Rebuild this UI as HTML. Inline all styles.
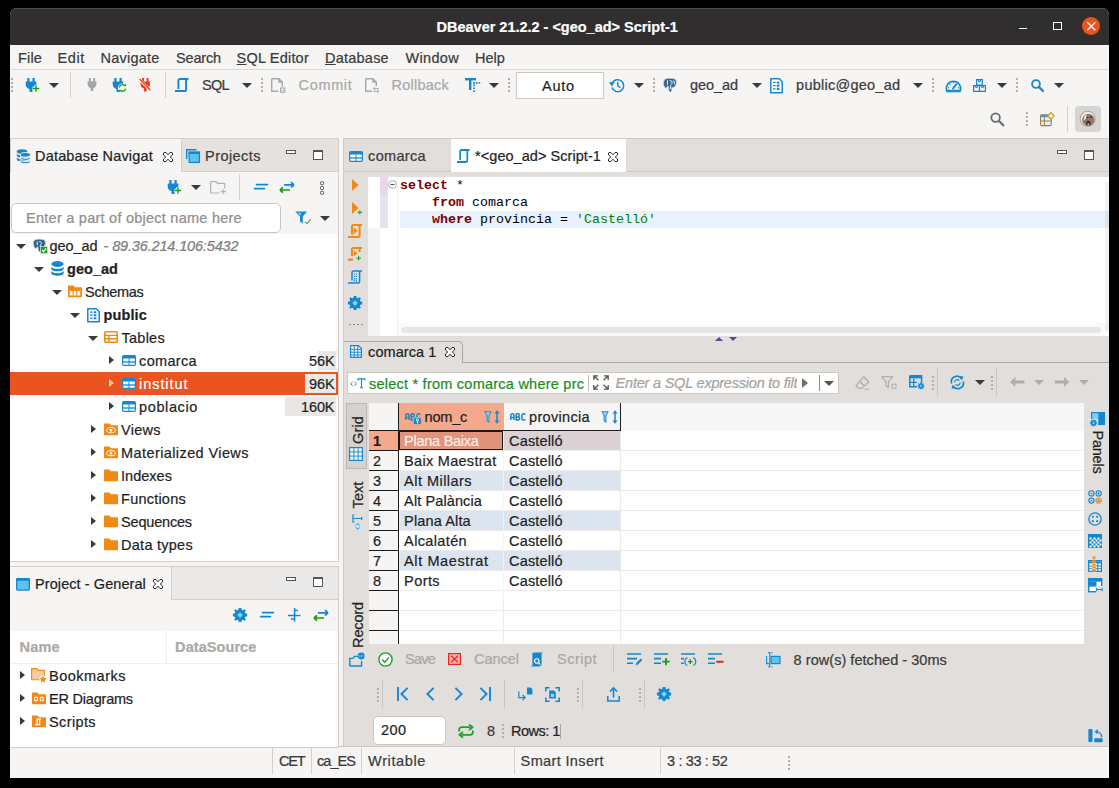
<!DOCTYPE html>
<html>
<head>
<meta charset="utf-8">
<title>DBeaver</title>
<style>
html,body{margin:0;padding:0;background:#000;}
body{width:1119px;height:788px;position:relative;overflow:hidden;font-family:"Liberation Sans",sans-serif;font-size:14.5px;color:#3a3a3a;}
.a{position:absolute;}
.t{position:absolute;white-space:nowrap;line-height:20px;height:20px;font-size:14.5px;-webkit-text-stroke:0.22px currentColor;margin-left:0.6px;}
.b{font-weight:bold;}
.i{font-style:italic;}
.dis{color:#a9a8a6;}
.dk{color:#1f1f1f;}
svg{position:absolute;overflow:visible;}
#win{position:absolute;left:10px;top:8px;width:1099px;height:770px;background:#f6f5f4;border-radius:7px 7px 0 0;overflow:hidden;}
#title{position:absolute;left:0;top:0;width:1099px;height:37px;background:#302e2f;border-top:1px solid #514f50;box-sizing:border-box;}
.hd{position:absolute;width:2px;height:14px;background:repeating-linear-gradient(to bottom,#b9ad9e 0,#b9ad9e 2px,transparent 2px,transparent 4px);}
.sep{position:absolute;width:1px;background:#d3cfcb;}
.arr{position:absolute;width:0;height:0;border-left:5px solid transparent;border-right:5px solid transparent;border-top:5.5px solid #3a3a3a;}
.tr{position:absolute;width:0;height:0;border-top:4.5px solid transparent;border-bottom:4.5px solid transparent;border-left:5px solid #3a3a3a;}
.td{position:absolute;width:0;height:0;border-left:5px solid transparent;border-right:5px solid transparent;border-top:5px solid #3a3a3a;}
.mono{font-family:"Liberation Mono",monospace;font-size:13.33px;line-height:17px;white-space:pre;position:absolute;color:#000;}
.kw{color:#7f0000;font-weight:bold;}
.str{color:#008000;}
</style>
</head>
<body>
<svg width="0" height="0" style="left:-10px;top:-10px">
<defs>
<!-- plug 12x14 -->
<path id="plug" d="M2.3 0 h2.2 v3.6 h3 v-3.6 h2.2 v3.6 h1.6 v2.8 c0 2.6 -2 4 -3.8 4.5 v3.1 h-3 v-3.1 c-1.8 -0.5 -3.8 -1.9 -3.8 -4.5 v-2.8 h1.6 z"/>
<!-- tab close X 10x10 -->
<path id="tabx" d="M1 0.5 L3 0.5 L5 2.8 L7 0.5 L9 0.5 L9.5 1 L9.5 3 L7.2 5 L9.5 7 L9.5 9 L9 9.5 L7 9.5 L5 7.2 L3 9.5 L1 9.5 L0.5 9 L0.5 7 L2.8 5 L0.5 3 L0.5 1 Z" fill="#fff" stroke="#2b2b2b" stroke-width="1"/>
<!-- folder 14x12 -->
<path id="folder" d="M0.5 0.5 h5 l1.5 1.8 h6.5 a0.5 0.5 0 0 1 0.5 0.5 v9 a0.5 0.5 0 0 1 -0.5 0.5 h-13 a0.5 0.5 0 0 1 -0.5 -0.5 v-11.3 z"/>
<!-- gear 15x15 -->
<g id="gear"><path d="M7.5 0 l1.4 0 l.5 2 l1.2 .5 l1.8 -1.1 l1.3 1.3 l-1.1 1.8 l.5 1.2 l2 .5 l0 2.6 l-2 .5 l-.5 1.2 l1.1 1.8 l-1.3 1.3 l-1.8 -1.1 l-1.2 .5 l-.5 2 l-2.8 0 l-.5 -2 l-1.2 -.5 l-1.8 1.1 l-1.3 -1.3 l1.1 -1.8 l-.5 -1.2 l-2 -.5 l0 -2.6 l2 -.5 l.5 -1.2 l-1.1 -1.8 l1.3 -1.3 l1.8 1.1 l1.2 -.5 l.5 -2 z" fill="#1487d0" transform="translate(0,0) scale(0.94)"/><path d="M7.05 4.2 l2.85 2.85 l-2.85 2.85 l-2.85 -2.85 z" fill="#7fd0f5"/></g>
</defs>
</svg>
<div id="win">
  <div id="title"></div>
</div>
<!-- all further coordinates are page-absolute -->
<div id="layer" class="a" style="left:0;top:0;width:1119px;height:788px;">
<!-- ===== TITLE ===== -->
<div class="t b" style="letter-spacing:-0.015px;left:436px;top:17px;color:#fff;">DBeaver 21.2.2 - &lt;geo_ad&gt; Script-1</div>
<!-- window controls -->
<div class="a" style="left:1019px;top:27.6px;width:8.2px;height:1.4px;background:#fff;"></div>
<div class="a" style="left:1053px;top:21.5px;width:8.6px;height:8.6px;border:1.2px solid #fff;box-sizing:border-box;"></div>
<div class="a" style="left:1081.7px;top:16.8px;width:18.6px;height:18.6px;border-radius:9.3px;background:#e95420;"></div>
<svg style="left:1081.7px;top:16.8px" width="18.6" height="18.6" viewBox="0 0 18.6 18.6"><path d="M5.3 5.3 L13.3 13.3 M13.3 5.3 L5.3 13.3" stroke="#fff" stroke-width="1.35" fill="none"/></svg>

<!-- ===== MENU ===== -->
<div class="a" style="left:10px;top:69px;width:1099px;height:1px;background:#dedbd7;"></div>
<div class="t" style="letter-spacing:0.106px;left:17.5px;top:48px;">File</div>
<div class="t" style="letter-spacing:0.575px;left:57.0px;top:48px;">Edit</div>
<div class="t" style="letter-spacing:0.196px;left:100.0px;top:48px;">Navigate</div>
<div class="t" style="letter-spacing:-0.192px;left:175.5px;top:48px;">Search</div>
<div class="t" style="letter-spacing:0.191px;left:236.0px;top:48px;"><u>S</u>QL Editor</div>
<div class="t" style="letter-spacing:0.213px;left:324.5px;top:48px;"><u>D</u>atabase</div>
<div class="t" style="letter-spacing:0.287px;left:405.0px;top:48px;">Window</div>
<div class="t" style="letter-spacing:-0.007px;left:474.5px;top:48px;">Help</div>

<!-- ===== TOOLBAR ROW 1 ===== -->
<div class="hd" style="left:11px;top:78px;"></div>
<svg style="left:24.5px;top:78px" width="15" height="14" viewBox="0 0 15 14"><use href="#plug" fill="#1487d0"/><path d="M7.5 10.5 h7 M11 7 v7" stroke="#f6f5f4" stroke-width="3.4"/><path d="M7.8 10.5 h6.4 M11 7.3 v6.4" stroke="#12a012" stroke-width="1.3"/></svg>
<div class="arr" style="left:49px;top:82.5px;"></div>
<div class="sep" style="left:70px;top:72px;height:26px;"></div>
<svg style="left:86.5px;top:78px" width="10" height="13" viewBox="0 0 12 14" preserveAspectRatio="none"><use href="#plug" fill="#a5a5a5"/></svg>
<svg style="left:112px;top:78px" width="15" height="14" viewBox="0 0 15 14"><use href="#plug" fill="#1487d0"/><circle cx="10.5" cy="10" r="4.6" fill="#f6f5f4"/><path d="M7.3 9.3 a3.3 3.3 0 0 1 5.6 -1.6 M13.7 10.7 a3.3 3.3 0 0 1 -5.6 1.6" stroke="#12a012" stroke-width="1.3" fill="none"/><path d="M11.6 7.9 l2.6 .4 l-.3 -2.6 z M9.4 12.1 l-2.6 -.4 l.3 2.6 z" fill="#12a012"/></svg>
<svg style="left:139.5px;top:78px" width="10.5" height="13.5" viewBox="0 0 12 14" preserveAspectRatio="none"><use href="#plug" fill="#f03a17"/><path d="M-0.5 1.5 L11.5 12.5" stroke="#f6f5f4" stroke-width="3"/><path d="M-0.5 1 L12 12.8" stroke="#f03a17" stroke-width="1.4"/></svg>
<div class="sep" style="left:165px;top:72px;height:26px;"></div>
<svg style="left:175px;top:78px" width="14" height="14" viewBox="0 0 14 14"><path d="M13.5 1 H5 a1.6 1.6 0 0 0 -1.6 1.6 V11 M0 13 H9.5 a1.6 1.6 0 0 0 1.6 -1.6 V1.5" stroke="#1487d0" stroke-width="1.9" fill="none"/></svg>
<div class="t" style="letter-spacing:-0.739px;left:201.5px;top:75px;">SQL</div>
<div class="arr" style="left:242px;top:82.5px;"></div>
<div class="hd" style="left:261px;top:78px;"></div>
<svg style="left:271px;top:78px" width="15" height="15" viewBox="0 0 15 15"><path d="M.7 .7 H8 L11.3 4 V8.5 M8 .7 V4 H11.3 M.7 .7 V13.3 H7.5" stroke="#a9a9a9" stroke-width="1.4" fill="none"/><rect x="9.6" y="10" width="4.2" height="4.2" fill="none" stroke="#a9a9a9" stroke-width="1.1"/><path d="M10.6 12.2 l1 1 l1.6 -2" stroke="#a9a9a9" stroke-width=".8" fill="none"/></svg>
<div class="t dis" style="letter-spacing:0.641px;left:298px;top:75px;">Commit</div>
<svg style="left:365px;top:78px" width="15" height="15" viewBox="0 0 15 15"><path d="M.7 .7 H8 L11.3 4 V8 M8 .7 V4 H11.3 M.7 .7 V13.3 H7" stroke="#a9a9a9" stroke-width="1.4" fill="none"/><path d="M8.5 10.6 H14 M8.5 10.6 l1.6 -1.5 M8.5 10.6 l1.6 1.5 M8.5 13.4 H14 M14 13.4 l-1.6 -1.5 M14 13.4 l-1.6 1.5" stroke="#a9a9a9" stroke-width="1" fill="none"/></svg>
<div class="t dis" style="letter-spacing:0.211px;left:391px;top:75px;">Rollback</div>
<svg style="left:465px;top:78px" width="15" height="15" viewBox="0 0 15 15"><path d="M0 1.2 H11" stroke="#1487d0" stroke-width="2.4" fill="none"/><path d="M5.2 1.2 V12" stroke="#1487d0" stroke-width="2.4" fill="none"/><path d="M8.2 4.8 H15.2" stroke="#1487d0" stroke-width="1.7" stroke-dasharray="1.7 1.1" fill="none"/><path d="M9 6.6 V15" stroke="#1487d0" stroke-width="1.7" stroke-dasharray="1.7 1.1" fill="none"/></svg>
<div class="arr" style="left:489px;top:82.5px;"></div>
<div class="hd" style="left:508px;top:78px;"></div>
<div class="a" style="left:516px;top:72px;width:88px;height:27px;background:#fff;border:1px solid #cdc7c2;box-sizing:border-box;"></div>
<div class="t dk" style="letter-spacing:0.739px;left:541.5px;top:75.5px;">Auto</div>
<svg style="left:609px;top:77.5px" width="16" height="15" viewBox="0 0 16 15"><path d="M3.2 5.2 A6 6 0 1 1 3 9.6" stroke="#1487d0" stroke-width="1.5" fill="none"/><path d="M0 4.3 L5.6 4 L3 8.6 Z" fill="#1487d0"/><path d="M8.8 3.8 V7.6 L11.4 9.6" stroke="#1487d0" stroke-width="1.4" fill="none"/></svg>
<div class="arr" style="left:634px;top:82.5px;"></div>
<div class="hd" style="left:653px;top:78px;"></div>
<!-- elephant -->
<svg style="left:663px;top:78px" width="14" height="15" viewBox="0 0 14 15"><path d="M2.5 1 C0.5 2 0 5 1 8 C1.6 10 3 10.5 4 9.5 L4.5 8 L5.5 8.5 L6 12.5 C6.2 14.5 8.2 14.5 8.6 12.5 L9 9.5 C11 10 13 8 13.4 5 C13.8 2 12 0.4 9.5 0.6 C8 0.2 4.5 0 2.5 1 Z" fill="#31648c" stroke="#c9d4e0" stroke-width=".9"/><path d="M4.4 2.2 V7 M6.6 2.6 C8 2.2 9.4 3 9.2 4.6 C9 6.2 7.6 6.4 7.6 7.8 V11 M10.4 2.4 C11.6 3 11.8 5 11 6.6" stroke="#f2f5f8" stroke-width="1" fill="none"/><circle cx="8" cy="4" r=".6" fill="#fff"/></svg>
<div class="t" style="letter-spacing:-0.098px;left:689.5px;top:75px;">geo_ad</div>
<div class="arr" style="left:752px;top:82.5px;"></div>
<svg style="left:769.5px;top:77.5px" width="13" height="16" viewBox="0 0 13 16"><path d="M.8 .8 H9.3 L12.2 3.7 V14.7 H.8 Z" stroke="#1487d0" stroke-width="1.5" fill="#fff" stroke-linejoin="round"/><path d="M3 4.4 h2.6 M3 7.6 h2.6 M3 10.8 h2.6" stroke="#1487d0" stroke-width="1.2"/><path d="M6.8 3.4 h2.6 v2.2 h-2.6 z M6.8 6.6 h2.6 v2.2 h-2.6 z M6.8 9.8 h2.6 v2.2 h-2.6 z" fill="#1487d0"/></svg>
<div class="t" style="letter-spacing:0.254px;left:795.5px;top:75px;">public@geo_ad</div>
<div class="arr" style="left:913px;top:82.5px;"></div>
<div class="hd" style="left:932px;top:78px;"></div>
<!-- gauge -->
<svg style="left:944.5px;top:78.8px" width="17" height="13.4" viewBox="0 0 17 13.4"><path d="M1.6 11.6 A7.2 7.2 0 1 1 15.4 11.6 Z" stroke="#1487d0" stroke-width="1.5" fill="none" stroke-linejoin="round"/><path d="M1.2 12.7 H15.8" stroke="#1487d0" stroke-width="1.2"/><path d="M8 9.6 L11.4 5.2" stroke="#1487d0" stroke-width="1.9" stroke-linecap="round"/><path d="M3 8.6 l1.2 .3 M4.6 5 l.9 .9 M8.5 3 v1.3 M14 8.6 l-1.2 .3" stroke="#1487d0" stroke-width="1.1"/></svg>
<!-- boxes -->
<svg style="left:973px;top:78.5px" width="13" height="13" viewBox="0 0 13 13"><path d="M3.6 .6 h5.8 v5.4 h-5.8 z M.6 6.6 h5.9 v5.8 h-5.9 z M6.5 6.6 h5.9 v5.8 h-5.9 z" stroke="#1487d0" stroke-width="1.2" fill="none"/><path d="M5.6 .6 v2 h1.8 v-2 M2.6 6.6 v1.8 h1.8 v-1.8 M8.6 6.6 v1.8 h1.8 v-1.8" stroke="#1487d0" stroke-width="1" fill="none"/></svg>
<div class="arr" style="left:997px;top:82.5px;"></div>
<div class="hd" style="left:1016px;top:78px;"></div>
<svg style="left:1030.5px;top:78.5px" width="13" height="13" viewBox="0 0 13 13"><circle cx="5" cy="5" r="3.9" stroke="#1487d0" stroke-width="1.8" fill="none"/><path d="M7.9 7.9 L12 12" stroke="#1487d0" stroke-width="2.2" stroke-linecap="round"/></svg>
<div class="arr" style="left:1054px;top:82.5px;"></div>

<!-- ===== TOOLBAR ROW 2 ===== -->
<svg style="left:990px;top:112px" width="15" height="15" viewBox="0 0 15 15"><circle cx="5.6" cy="5.6" r="4.3" stroke="#6b6b6b" stroke-width="1.8" fill="none"/><path d="M8.8 8.8 L14 14" stroke="#6b6b6b" stroke-width="2.2"/></svg>
<div class="hd" style="left:1026px;top:112px;"></div>
<svg style="left:1040px;top:111.6px" width="15" height="14.4" viewBox="0 0 15 14.4"><rect x=".6" y="2.8" width="10.6" height="10.8" rx="1" fill="#e3f1fb" stroke="#9a8040" stroke-width="1.1"/><path d="M.6 3.8 a1 1 0 0 1 1 -1 h8.6 a1 1 0 0 1 1 1 v1.4 h-10.6 z" fill="#4f93d6"/><path d="M.6 9 h10.6 M4.4 5.2 v8.4" stroke="#9a8040" stroke-width="1.1"/><path d="M10.8 0 L14.6 3.8 L10.8 7.6 L7 3.8 Z" fill="#d9a520" stroke="#b8860b" stroke-width=".5"/><path d="M10.8 1.8 v4 M8.8 3.8 h4" stroke="#fff" stroke-width="1.3"/></svg>
<div class="sep" style="left:1067px;top:106px;height:26px;"></div>
<div class="a" style="left:1075px;top:106px;width:26px;height:26px;background:#d6d5d4;border-radius:4px;"></div>
<svg style="left:1080.4px;top:111.4px" width="15.4" height="15.4" viewBox="0 0 15.4 15.4"><circle cx="7.7" cy="7.7" r="7.5" fill="#efe9e1" stroke="#6e6258" stroke-width=".5"/><path d="M2.2 8.8 C2.6 5.2 5.6 2.6 9 3 C12.4 3.4 14.6 6 14.4 9.4 C14 12.6 11.4 14.8 8.2 14.8 C5 14.8 2 12.4 2.2 8.8 Z" fill="#8e7767"/><path d="M4.6 5.4 L6.8 3.6 L5.8 7.2 L3.4 10 Z" fill="#fff"/><path d="M6.4 11 C7 9.4 9.6 9.4 10.2 11 L10.6 14 C9.4 14.8 7.4 14.8 6.2 14 Z" fill="#3a2c26"/><path d="M9.8 5.6 h2.2 v1.2 h-2.2 z M6.8 6 h1.4 v1 h-1.4 z" fill="#2e2420"/><path d="M7.6 12.6 h1.6 v1.6 h-1.6 z" fill="#e8ddd0"/></svg>

<!-- ===== LEFT TOP PANEL (Database Navigator) ===== -->
<div class="a" id="lborder" style="left:10px;top:139px;width:1px;height:33px;background:#cbc7c3;z-index:5;"></div>
<div class="a" style="left:10px;top:138px;width:329px;height:424px;background:#d4cfca;"></div>
<div class="a" style="left:10px;top:139px;width:328px;height:422px;background:#f6f5f4;"></div>
<!-- tab bar -->
<div class="a" style="left:181px;top:139px;width:157px;height:33px;background:#e4e1de;border-left:1px solid #d4cfca;border-bottom:1px solid #d4cfca;box-sizing:border-box;"></div>
<!-- db navigator icon -->
<svg style="left:15.5px;top:148.5px" width="15" height="15" viewBox="0 0 15 15"><g fill="#1487d0"><ellipse cx="6" cy="2.6" rx="5.2" ry="2.4"/><path d="M.8 4.2 c0 3 10.4 3 10.4 0 v2.2 c0 3 -10.4 3 -10.4 0 z"/><path d="M.8 8 c0 3 10.4 3 10.4 0 v2.2 c0 3 -10.4 3 -10.4 0 z"/></g><g fill="#1487d0" stroke="#f6f5f4" stroke-width=".9"><ellipse cx="9.4" cy="5.8" rx="5" ry="2.3"/><path d="M4.4 7.2 c0 2.8 10 2.8 10 0 v2 c0 2.8 -10 2.8 -10 0 z"/><path d="M4.4 10.6 c0 2.8 10 2.8 10 0 v2 c0 2.8 -10 2.8 -10 0 z"/></g></svg>
<div class="t dk" style="letter-spacing:0.158px;left:34.5px;top:146px;">Database Navigat</div>
<svg style="left:163px;top:151.5px" width="10" height="10" viewBox="0 0 10 10"><use href="#tabx"/></svg>
<svg style="left:186px;top:148.5px" width="14" height="14" viewBox="0 0 14 14"><path d="M.7 10 V.7 H10.5" stroke="#1487d0" stroke-width="1.4" fill="none"/><rect x="3.2" y="3.2" width="10.2" height="10.2" fill="#5ec3f0" stroke="#1487d0" stroke-width="1.3"/><rect x="2.6" y="2.6" width="11.4" height="2.4" fill="#1487d0"/></svg>
<div class="t" style="letter-spacing:0.426px;left:204.5px;top:146px;">Projects</div>
<div class="a" style="left:286px;top:150px;width:10px;height:4px;border:1px solid #555;background:#fff;box-sizing:border-box;"></div>
<div class="a" style="left:313px;top:150px;width:10px;height:10px;border:1px solid #555;border-top-width:2px;background:#fff;box-sizing:border-box;"></div>
<!-- nav toolbar -->
<svg style="left:167px;top:180px" width="15" height="14" viewBox="0 0 15 14"><use href="#plug" fill="#1487d0"/><path d="M7.5 10.5 h7 M11 7 v7" stroke="#f6f5f4" stroke-width="3.4"/><path d="M7.8 10.5 h6.4 M11 7.3 v6.4" stroke="#12a012" stroke-width="1.3"/></svg>
<div class="arr" style="left:191px;top:185px;"></div>
<svg style="left:210px;top:180.5px" width="17" height="13" viewBox="0 0 17 13"><path d="M.6 12 V1.4 a.8 .8 0 0 1 .8 -.8 H6 l1.6 1.8 H14 a.8 .8 0 0 1 .8 .8 V7.5 M.6 12 H9.5" stroke="#b3b3b3" stroke-width="1.2" fill="none"/><path d="M10.6 10.6 h5.4 M13.3 8 v5.2" stroke="#b3b3b3" stroke-width="1.1"/></svg>
<div class="sep" style="left:239px;top:174px;height:26px;"></div>
<svg style="left:253.5px;top:183px" width="14" height="8" viewBox="0 0 14 8"><path d="M2.5 1.6 H13.5 M.5 5.6 H10.5" stroke="#1487d0" stroke-width="1.6" stroke-linecap="round"/></svg>
<svg style="left:279px;top:182px" width="16" height="11" viewBox="0 0 16 11"><path d="M5 2.8 H15 M15 2.8 l-3 -2.6 M15 2.8 l-3 2.6" stroke="#1487d0" stroke-width="1.7" fill="none" stroke-linejoin="round"/><path d="M11 8 H1 M1 8 l3 -2.6 M1 8 l3 2.6" stroke="#12a012" stroke-width="1.7" fill="none" stroke-linejoin="round"/></svg>
<svg style="left:318.5px;top:180.5px" width="6" height="14" viewBox="0 0 6 14"><circle cx="3" cy="2.2" r="1.7" stroke="#555" stroke-width=".9" fill="#fff"/><circle cx="3" cy="7" r="1.7" stroke="#555" stroke-width=".9" fill="#fff"/><circle cx="3" cy="11.8" r="1.7" stroke="#555" stroke-width=".9" fill="#fff"/></svg>
<!-- filter input -->
<div class="a" style="left:11px;top:203px;width:270px;height:30px;background:#fff;border:1px solid #cdc7c2;border-radius:5px;box-sizing:border-box;"></div>
<div class="t" style="letter-spacing:0.245px;left:25.5px;top:207.5px;color:#8f8e8c;">Enter a part of object name here</div>
<svg style="left:295px;top:211px" width="17" height="14" viewBox="0 0 17 14"><path d="M.3 .5 H12 L7.8 5.6 V12.6 L5 10.6 V5.6 Z" fill="#1487d0"/><path d="M2.4 1.8 H6 L5.8 4.8 Z" fill="#7fd0f5"/><path d="M10 10.6 l2 2 l3.6 -4.4" stroke="#3faa3f" stroke-width="1.1" fill="none"/></svg>
<div class="arr" style="left:319.5px;top:216px;"></div>
<!-- tree -->
<div class="a" style="left:10px;top:234px;width:328px;height:327px;background:#fff;"></div>
<div class="a" style="left:10px;top:372px;width:328px;height:23px;background:#e95420;"></div>
<!-- size bars -->
<div class="a" style="left:318px;top:351px;width:18px;height:19px;background:#e8e7e6;"></div>
<div class="a" style="left:304.5px;top:374px;width:31.5px;height:19px;background:#ebe9e7;"></div>
<div class="a" style="left:285px;top:397px;width:51px;height:19px;background:#e8e7e6;"></div>
<!-- row 1 -->
<div class="td" style="left:16px;top:244px;"></div>
<svg style="left:32.5px;top:238.5px" width="15" height="15" viewBox="0 0 15 15"><path d="M2 .8 C.2 1.8 0 4.8 1 7.6 C1.5 9.4 3 9.8 3.8 8.8 L4.8 7.6 L5.4 11.4 C5.6 13 7.4 13 7.8 11.4 L8.2 8.8 C10 9.4 12 7.4 12.4 4.6 C12.8 1.8 11 .2 8.8 .5 C7.4 .1 3.8 -.1 2 .8 Z" fill="#31648c" stroke="#c3cfdc" stroke-width=".8"/><path d="M4.2 2.4 V6 M6.2 2.6 C7.4 2.2 8.6 3 8.4 4.3 C8.2 5.6 7 6 7 7.2" stroke="#eef2f6" stroke-width="1" fill="none"/><rect x="7.6" y="7.6" width="7" height="7" fill="#17a017" stroke="#e8f3e8" stroke-width=".6"/><path d="M9 11 l1.6 1.7 l2.6 -3.3" stroke="#fff" stroke-width="1.3" fill="none"/></svg>
<div class="t dk" style="letter-spacing:-0.098px;left:49px;top:236px;">geo_ad</div>
<div class="t i" style="letter-spacing:-0.154px;left:103px;top:236px;color:#7d7d7d;">- 89.36.214.106:5432</div>
<!-- row 2 -->
<div class="td" style="left:34px;top:267px;"></div>
<svg style="left:50.5px;top:261px" width="13" height="15" viewBox="0 0 13 15"><g fill="#1487d0"><ellipse cx="6.5" cy="3" rx="6.2" ry="2.9"/><path d="M.3 5.2 c0 3.4 12.4 3.4 12.4 0 v2.6 c0 3.4 -12.4 3.4 -12.4 0 z"/><path d="M.3 9.6 c0 3.4 12.4 3.4 12.4 0 v2.4 c0 3.6 -12.4 3.6 -12.4 0 z"/></g></svg>
<div class="t b dk" style="letter-spacing:0.006px;left:66.5px;top:259px;">geo_ad</div>
<!-- row 3 -->
<div class="td" style="left:52px;top:290px;"></div>
<svg style="left:68px;top:285px" width="14" height="12" viewBox="0 0 14 12"><use href="#folder" fill="#ef8a17"/><rect x="1.8" y="4" width="10.4" height="6.4" fill="#fff"/><rect x="1.8" y="4" width="10.4" height="2" fill="#ef8a17"/><path d="M5.1 4 v6.4 M8.7 4 v6.4" stroke="#ef8a17" stroke-width="1.1"/></svg>
<div class="t dk" style="letter-spacing:-0.308px;left:84.5px;top:282px;">Schemas</div>
<!-- row 4 -->
<div class="td" style="left:70px;top:313px;"></div>
<svg style="left:86.5px;top:307.5px" width="13" height="15" viewBox="0 0 13 16" preserveAspectRatio="none"><path d="M.8 .8 H9.3 L12.2 3.7 V14.7 H.8 Z" stroke="#1487d0" stroke-width="1.5" fill="#fff" stroke-linejoin="round"/><path d="M3 4.4 h2.6 M3 7.6 h2.6 M3 10.8 h2.6" stroke="#1487d0" stroke-width="1.2"/><path d="M6.8 3.4 h2.6 v2.2 h-2.6 z M6.8 6.6 h2.6 v2.2 h-2.6 z M6.8 9.8 h2.6 v2.2 h-2.6 z" fill="#1487d0"/></svg>
<div class="t b dk" style="letter-spacing:0.099px;left:103px;top:305px;">public</div>
<!-- row 5 -->
<div class="td" style="left:88px;top:336px;"></div>
<svg style="left:104px;top:331px" width="14" height="12" viewBox="0 0 14 12"><rect x=".8" y=".8" width="12.4" height="10.4" rx=".8" fill="#fff" stroke="#ef8a17" stroke-width="1.6"/><path d="M.8 4.4 h12.4 M.8 7.8 h12.4 M5 4.4 v7" stroke="#ef8a17" stroke-width="1.4"/></svg>
<div class="t dk" style="letter-spacing:0.230px;left:121px;top:328px;">Tables</div>
<!-- row 6 comarca -->
<div class="tr" style="left:109px;top:356px;"></div>
<svg style="left:122px;top:354.5px" width="14" height="11" viewBox="0 0 14 11"><rect x=".6" y=".6" width="12.8" height="9.8" rx="1.4" fill="#fff" stroke="#1487d0" stroke-width="1.2"/><path d="M.6 1.6 a1 1 0 0 1 1 -1 h10.8 a1 1 0 0 1 1 1 v2 h-12.8 z" fill="#1487d0"/><path d="M.6 7 h12.8" stroke="#1487d0" stroke-width="1.3"/><path d="M7 3.4 v7" stroke="#1487d0" stroke-width="1"/></svg>
<div class="t dk" style="letter-spacing:0.313px;left:138.5px;top:351px;">comarca</div>
<div class="t dk" style="letter-spacing:-0.171px;left:308.5px;top:351px;">56K</div>
<!-- row 7 institut -->
<div class="tr" style="left:109px;top:379px;border-left-color:#f8c4b0;"></div>
<svg style="left:122px;top:377.5px" width="14" height="11" viewBox="0 0 14 11"><rect x=".6" y=".6" width="12.8" height="9.8" rx="1.4" fill="#fff" stroke="#1487d0" stroke-width="1.2"/><path d="M.6 1.6 a1 1 0 0 1 1 -1 h10.8 a1 1 0 0 1 1 1 v2 h-12.8 z" fill="#1487d0"/><path d="M.6 7 h12.8" stroke="#1487d0" stroke-width="1.3"/><path d="M7 3.4 v7" stroke="#1487d0" stroke-width="1"/></svg>
<div class="t" style="letter-spacing:0.922px;left:138.5px;top:374px;color:#fff;">institut</div>
<div class="t dk" style="letter-spacing:-0.171px;left:308.5px;top:374px;">96K</div>
<!-- row 8 poblacio -->
<div class="tr" style="left:109px;top:402px;"></div>
<svg style="left:122px;top:400.5px" width="14" height="11" viewBox="0 0 14 11"><rect x=".6" y=".6" width="12.8" height="9.8" rx="1.4" fill="#fff" stroke="#1487d0" stroke-width="1.2"/><path d="M.6 1.6 a1 1 0 0 1 1 -1 h10.8 a1 1 0 0 1 1 1 v2 h-12.8 z" fill="#1487d0"/><path d="M.6 7 h12.8" stroke="#1487d0" stroke-width="1.3"/><path d="M7 3.4 v7" stroke="#1487d0" stroke-width="1"/></svg>
<div class="t dk" style="letter-spacing:0.598px;left:138.5px;top:397px;">poblacio</div>
<div class="t dk" style="letter-spacing:-0.144px;left:300.5px;top:397px;">160K</div>
<!-- row 9 Views -->
<div class="tr" style="left:91px;top:425px;"></div>
<svg style="left:104px;top:422.5px" width="14" height="12" viewBox="0 0 14 12"><use href="#folder" fill="#ef8a17"/><ellipse cx="7" cy="7.2" rx="4.4" ry="2.6" fill="none" stroke="#fff" stroke-width="1"/><circle cx="7" cy="7.2" r="1.3" fill="#fff"/></svg>
<div class="t dk" style="letter-spacing:0.276px;left:120.5px;top:420px;">Views</div>
<!-- row 10 -->
<div class="tr" style="left:91px;top:448px;"></div>
<svg style="left:104px;top:445.5px" width="14" height="12" viewBox="0 0 14 12"><use href="#folder" fill="#ef8a17"/><ellipse cx="7" cy="7.2" rx="4.4" ry="2.6" fill="none" stroke="#fff" stroke-width="1"/><circle cx="7" cy="7.2" r="1.3" fill="#fff"/></svg>
<div class="t dk" style="letter-spacing:0.399px;left:120.5px;top:443px;">Materialized Views</div>
<!-- row 11 -->
<div class="tr" style="left:91px;top:471px;"></div>
<svg style="left:104px;top:468.5px" width="14" height="12" viewBox="0 0 14 12"><use href="#folder" fill="#ef8a17"/></svg>
<div class="t dk" style="letter-spacing:0.000px;left:120.5px;top:466px;">Indexes</div>
<!-- row 12 -->
<div class="tr" style="left:91px;top:494px;"></div>
<svg style="left:104px;top:491.5px" width="14" height="12" viewBox="0 0 14 12"><use href="#folder" fill="#ef8a17"/></svg>
<div class="t dk" style="letter-spacing:0.214px;left:120.5px;top:489px;">Functions</div>
<!-- row 13 -->
<div class="tr" style="left:91px;top:517px;"></div>
<svg style="left:104px;top:514.5px" width="14" height="12" viewBox="0 0 14 12"><use href="#folder" fill="#ef8a17"/></svg>
<div class="t dk" style="letter-spacing:-0.196px;left:120.5px;top:512px;">Sequences</div>
<!-- row 14 -->
<div class="tr" style="left:91px;top:540px;"></div>
<svg style="left:104px;top:537.5px" width="14" height="12" viewBox="0 0 14 12"><use href="#folder" fill="#ef8a17"/></svg>
<div class="t dk" style="letter-spacing:0.247px;left:120.5px;top:535px;">Data types</div>

<!-- ===== LEFT BOTTOM PANEL (Project) ===== -->
<div class="a" style="left:10px;top:566px;width:329px;height:181px;background:#d4cfca;"></div>
<div class="a" style="left:10px;top:567px;width:328px;height:180px;background:#f6f5f4;"></div>
<div class="a" style="left:171px;top:567px;width:167px;height:33px;background:#ebe9e7;border-left:1px solid #d4cfca;border-bottom:1px solid #d4cfca;box-sizing:border-box;"></div>
<svg style="left:16px;top:577.5px" width="14" height="13" viewBox="0 0 14 13"><rect x=".7" y=".7" width="12.6" height="11.4" rx=".8" fill="#5ec3f0" stroke="#1487d0" stroke-width="1.3"/><rect x=".2" y=".2" width="13.6" height="2.6" fill="#1487d0"/></svg>
<div class="t dk" style="letter-spacing:0.070px;left:34.5px;top:573.5px;">Project - General</div>
<svg style="left:153px;top:579px" width="10" height="10" viewBox="0 0 10 10"><use href="#tabx"/></svg>
<div class="a" style="left:286px;top:577px;width:10px;height:4px;border:1px solid #555;background:#fff;box-sizing:border-box;"></div>
<div class="a" style="left:313px;top:577px;width:10px;height:10px;border:1px solid #555;border-top-width:2px;background:#fff;box-sizing:border-box;"></div>
<svg style="left:232.5px;top:608px" width="15" height="15" viewBox="0 0 15 15"><use href="#gear"/></svg>
<svg style="left:260px;top:611px" width="14" height="8" viewBox="0 0 14 8"><path d="M2.5 1.6 H13.5 M.5 5.6 H10.5" stroke="#1487d0" stroke-width="1.6" stroke-linecap="round"/></svg>
<svg style="left:288px;top:608px" width="14" height="14" viewBox="0 0 14 14"><path d="M6.6 0 V13.5 M0 7.4 H12.6 M6.6 2.6 H10 M3 11 H6.6" stroke="#1487d0" stroke-width="1.5" fill="none"/><path d="M8.6 3 V5.6 H13" stroke="#f6f5f4" stroke-width="1.2" fill="none"/></svg>
<svg style="left:313px;top:610px" width="16" height="11" viewBox="0 0 16 11"><path d="M5 2.8 H15 M15 2.8 l-3 -2.6 M15 2.8 l-3 2.6" stroke="#1487d0" stroke-width="1.7" fill="none" stroke-linejoin="round"/><path d="M11 8 H1 M1 8 l3 -2.6 M1 8 l3 2.6" stroke="#12a012" stroke-width="1.7" fill="none" stroke-linejoin="round"/></svg>
<!-- header + tree -->
<div class="a" style="left:10px;top:631px;width:328px;height:116px;background:#fff;"></div>
<div class="a" style="left:10px;top:663px;width:328px;height:1px;background:#f0efee;"></div>
<div class="a" style="left:166px;top:631px;width:1px;height:32px;background:#f0efee;"></div>
<div class="t b" style="letter-spacing:0.200px;left:19px;top:636.5px;color:#aaa9a7;">Name</div>
<div class="t b" style="letter-spacing:0.071px;left:174.5px;top:636.5px;color:#aaa9a7;">DataSource</div>
<div class="tr" style="left:19.5px;top:671px;"></div>
<svg style="left:31px;top:668px" width="16" height="15" viewBox="0 0 16 15"><path d="M.6 .6 h5 l1.5 1.8 h6.3 v9.4 h-12.8 z" fill="#f9c9a0" stroke="#ef8a17" stroke-width="1.1"/><circle cx="12" cy="11.2" r="3.6" fill="#fff"/><path d="M12 7.6 l1.1 2.3 l2.5 .3 l-1.8 1.7 l.5 2.5 l-2.3 -1.2 l-2.3 1.2 l.5 -2.5 l-1.8 -1.7 l2.5 -.3 z" fill="#ef8a17"/></svg>
<div class="t dk" style="letter-spacing:0.474px;left:48.5px;top:665.5px;">Bookmarks</div>
<div class="tr" style="left:19.5px;top:694px;"></div>
<svg style="left:32px;top:692px" width="14" height="12" viewBox="0 0 14 12"><use href="#folder" fill="#ef8a17"/><rect x="2.2" y="4.8" width="3.8" height="4.4" fill="#fff"/><rect x="7.8" y="4.8" width="3.8" height="4.4" fill="#fff"/><rect x="3.2" y="5.8" width="1.8" height="2.4" fill="#ef8a17"/><rect x="8.8" y="5.8" width="1.8" height="2.4" fill="#ef8a17"/></svg>
<div class="t dk" style="letter-spacing:-0.220px;left:48.5px;top:688.5px;">ER Diagrams</div>
<div class="tr" style="left:19.5px;top:717px;"></div>
<svg style="left:32px;top:715px" width="14" height="12" viewBox="0 0 14 12"><use href="#folder" fill="#ef8a17"/><path d="M9 4.2 H5.2 V9 M3.2 9.6 H7.6 V4.8" stroke="#fff" stroke-width="1.3" fill="none"/></svg>
<div class="t dk" style="letter-spacing:0.353px;left:48.5px;top:711.5px;">Scripts</div>

<!-- ===== RIGHT PANEL ===== -->
<div class="a" style="left:343px;top:138px;width:766px;height:609px;background:#cfcac5;"></div>
<div class="a" style="left:344px;top:139px;width:765px;height:607px;background:#e1dedb;"></div>
<!-- tab bar line -->
<div class="a" style="left:344px;top:171px;width:765px;height:1px;background:#cdc8c3;"></div>
<!-- inactive tab: comarca -->
<svg style="left:349px;top:150.5px" width="14" height="11" viewBox="0 0 14 11"><rect x=".6" y=".6" width="12.8" height="9.8" rx="1.4" fill="#fff" stroke="#1487d0" stroke-width="1.2"/><path d="M.6 1.6 a1 1 0 0 1 1 -1 h10.8 a1 1 0 0 1 1 1 v2 h-12.8 z" fill="#1487d0"/><path d="M.6 7 h12.8" stroke="#1487d0" stroke-width="1.3"/><path d="M7 3.4 v7" stroke="#1487d0" stroke-width="1"/></svg>
<div class="t" style="letter-spacing:0.313px;left:367.5px;top:146px;">comarca</div>
<!-- active tab -->
<div class="a" style="left:451px;top:139px;width:175px;height:33px;background:#fff;"></div>
<svg style="left:456.5px;top:149px" width="13" height="14" viewBox="0 0 14 14" preserveAspectRatio="none"><path d="M13.5 1 H5 a1.6 1.6 0 0 0 -1.6 1.6 V11 M0 13 H9.5 a1.6 1.6 0 0 0 1.6 -1.6 V1.5" stroke="#1487d0" stroke-width="1.8" fill="none"/></svg>
<div class="t dk" style="letter-spacing:0.047px;left:474.5px;top:146px;">*&lt;geo_ad&gt; Script-1</div>
<svg style="left:608px;top:151.5px" width="10" height="10" viewBox="0 0 10 10"><use href="#tabx"/></svg>
<div class="a" style="left:1057px;top:150px;width:10px;height:4px;border:1px solid #555;background:#fff;box-sizing:border-box;"></div>
<div class="a" style="left:1084px;top:150px;width:10px;height:10px;border:1px solid #555;border-top-width:2px;background:#fff;box-sizing:border-box;"></div>

<!-- editor -->
<div class="a" style="left:368px;top:177px;width:741px;height:159px;background:#fff;"></div>
<div class="a" style="left:368px;top:228px;width:12px;height:108px;background:#f5f4f2;"></div>
<div class="a" style="left:380px;top:177px;width:8px;height:17px;background:#ead6ea;"></div>
<div class="a" style="left:380px;top:194px;width:8px;height:34px;background:#e5e1ef;"></div>
<div class="a" style="left:397px;top:177px;width:1px;height:159px;background:#f0f0f0;"></div>
<div class="a" style="left:400px;top:211px;width:709px;height:17px;background:#e8f2fe;"></div>
<!-- fold marker -->
<svg style="left:388px;top:180px" width="9" height="9" viewBox="0 0 9 9"><circle cx="4.5" cy="4.5" r="3.9" fill="#fff" stroke="#9aa0a8" stroke-width=".9"/><path d="M2.4 4.5 H6.6" stroke="#555" stroke-width="1"/></svg>
<div class="mono" style="left:400px;top:177px;"><span class="kw">select</span> *
    <span class="kw">from</span> comarca
    <span class="kw">where</span> provincia = <span class="str">'Castelló'</span></div>
<!-- scrollbars -->
<div class="a" style="left:398px;top:323px;width:711px;height:13px;background:#fafafa;"></div>
<div class="a" style="left:401px;top:327px;width:700px;height:6px;background:#e6e6e6;border-radius:3px;"></div>
<div class="a" style="left:1104.5px;top:181px;width:4px;height:150px;background:rgba(0,0,0,0.055);border-radius:2px;"></div>
<!-- left icon strip -->
<svg style="left:352px;top:179px" width="7" height="12" viewBox="0 0 7 12"><path d="M0 0 L6.6 6 L0 12 Z" fill="#ef8a17"/></svg>
<svg style="left:352px;top:202px" width="10" height="13" viewBox="0 0 10 13"><path d="M0 0 L6.6 6 L0 12 Z" fill="#ef8a17"/><path d="M5.6 10.4 h4.4 M7.8 8.2 v4.4" stroke="#3a9a2a" stroke-width="1.1"/></svg>
<svg style="left:348px;top:224px" width="15" height="14" viewBox="0 0 15 14"><path d="M14 1 H5.6 a1.6 1.6 0 0 0 -1.6 1.6 V10.6 M0 13 H10 a1.6 1.6 0 0 0 1.6 -1.6 V1.5" stroke="#ef8a17" stroke-width="2.1" fill="none"/><path d="M5.6 3.2 L9.8 6.8 L5.6 10.4 Z" fill="#ef8a17"/></svg>
<svg style="left:348px;top:247px" width="15" height="14" viewBox="0 0 15 14"><path d="M14 1 H5.6 a1.6 1.6 0 0 0 -1.6 1.6 V9 M0 12.6 H5 M11.6 1.5 V5" stroke="#ef8a17" stroke-width="2.1" fill="none"/><path d="M5.8 3.2 L9.6 6.4 L5.8 9.6 Z" fill="#ef8a17"/><path d="M8.2 11.2 h4.8 M10.6 8.8 v4.8" stroke="#3a9a2a" stroke-width="1.1"/></svg>
<svg style="left:348px;top:270px" width="15" height="14" viewBox="0 0 15 14"><path d="M14 1 H5.6 a1.6 1.6 0 0 0 -1.6 1.6 V10.6 M0 13 H10 a1.6 1.6 0 0 0 1.6 -1.6 V1.5" stroke="#1487d0" stroke-width="1.5" fill="none"/><path d="M5.8 4 h4 M5.8 6.4 h4 M5.8 8.8 h4 M5.8 10.8 h4" stroke="#1487d0" stroke-width="1.2" stroke-dasharray="1.2 .8"/></svg>
<svg style="left:347.5px;top:295.5px" width="15" height="15" viewBox="0 0 15 15"><use href="#gear"/></svg>
<div class="a" style="left:349px;top:323.5px;width:14px;height:1.6px;background:repeating-linear-gradient(to right,#8a8784 0,#8a8784 1.6px,transparent 1.6px,transparent 4px);"></div>
<!-- sash arrows -->
<svg style="left:715px;top:337px" width="22" height="4" viewBox="0 0 22 4"><path d="M0 4 L4 0 L8 4 Z M14 0 L22 0 L18 4 Z" fill="#4d4d9c"/></svg>

<!-- results tab -->
<div class="a" style="left:344px;top:362px;width:765px;height:1px;background:#a9a6a3;"></div>
<div class="a" style="left:344px;top:341px;width:119px;height:22px;background:#e1dedb;border-top:1px solid #a9a6a3;border-right:1px solid #a9a6a3;border-radius:0 5px 0 0;box-sizing:border-box;"></div>
<svg style="left:350px;top:345px" width="12" height="13" viewBox="0 0 12 13"><path d="M.6 .6 H8.4 L11.4 3.6 V12.4 H.6 Z" fill="#fff" stroke="#1487d0" stroke-width="1.2"/><path d="M.6 4.4 H11.4 M.6 7.2 H11.4 M.6 10 H11.4 M4.2 .6 V12.4 M7.8 .6 V12.4" stroke="#1487d0" stroke-width="1"/></svg>
<div class="t dk" style="letter-spacing:0.066px;left:367.5px;top:342px;">comarca 1</div>
<svg style="left:445px;top:347px" width="10" height="10" viewBox="0 0 10 10"><use href="#tabx"/></svg>

<!-- filter bar -->
<div class="a" style="left:347px;top:372px;width:492px;height:22px;background:#fff;border:1px solid #cdc7c2;box-sizing:border-box;"></div>
<svg style="left:349.5px;top:378px" width="16" height="11" viewBox="0 0 16 11"><path d="M2.6 3.8 L.7 5.7 L2.6 7.6 M4.6 3.8 L6.5 5.7 L4.6 7.6" stroke="#1487d0" stroke-width="1" fill="none"/><path d="M8 2.4 V.9 H15 V2.4 M11.5 .9 V9.6 M10 9.7 H13" stroke="#1487d0" stroke-width="1.1" fill="none"/></svg>
<div class="t" style="letter-spacing:0.239px;left:368.3px;top:373.6px;color:#1e8b1e;">select * from comarca where prc</div>
<div class="a" style="left:588px;top:375px;width:1px;height:16px;background:#bdbdbd;"></div>
<svg style="left:592.5px;top:375px" width="16" height="15" viewBox="0 0 16 15"><path d="M.8 5 V.8 H5 M.8 .8 L5.4 5.2 M11 .8 H15.2 V5 M15.2 .8 L10.6 5.2 M.8 10 V14.2 H5 M.8 14.2 L5.4 9.8 M11 14.2 H15.2 V10 M15.2 14.2 L10.6 9.8" stroke="#555" stroke-width="1.3" fill="none"/></svg>
<div class="t i" style="letter-spacing:-0.218px;left:615px;top:372.5px;color:#a4a3a1;">Enter a SQL expression to filt</div>
<div class="a" style="left:797px;top:373px;width:42px;height:20px;background:#fff;border-right:1px solid #cdc7c2;box-sizing:border-box;"></div>
<svg style="left:802px;top:378px" width="6" height="10" viewBox="0 0 6 10"><path d="M0 0 L6 5 L0 10 Z" fill="#707070"/></svg>
<div class="a" style="left:819px;top:375px;width:1px;height:16px;background:#8a8a8a;"></div>
<div class="arr" style="left:823.5px;top:380.5px;border-top-color:#555;"></div>
<!-- filter toolbar icons -->
<svg style="left:855px;top:375.5px" width="15" height="14" viewBox="0 0 15 14"><path d="M8.6 .8 L13.6 5.8 L7 12.4 H3.8 L1 9.6 Z M4.4 5 L9.4 10" stroke="#b0aeab" stroke-width="1.3" fill="none" stroke-linejoin="round"/><path d="M9.6 13.2 H14" stroke="#b0aeab" stroke-width="1.1"/></svg>
<svg style="left:881px;top:375.5px" width="16" height="13" viewBox="0 0 16 13"><path d="M.8 .7 H11.6 L7.4 5.8 V11.6 L5 9.8 V5.8 Z" stroke="#b0aeab" stroke-width="1.2" fill="none" stroke-linejoin="round"/><rect x="11" y="8.2" width="4" height="4" fill="none" stroke="#b0aeab" stroke-width="1"/></svg>
<svg style="left:908.5px;top:375px" width="16" height="15" viewBox="0 0 16 15"><path d="M.8 .8 H12.6 V8 M.8 .8 V11.8 H8" stroke="#1487d0" stroke-width="1.5" fill="none"/><path d="M.8 .8 H12.6 V3.4 H.8 Z" fill="#1487d0"/><path d="M.8 7.4 H8 M4.8 3.4 V11.8" stroke="#1487d0" stroke-width="1.3"/><g transform="translate(8.6,7.6) scale(.48)"><use href="#gear"/></g></svg>
<div class="hd" style="left:931.5px;top:376px;"></div>
<div class="a" style="left:937px;top:367px;width:1px;height:29px;background:#c8c4c0;"></div>
<svg style="left:950px;top:374.5px" width="15" height="15" viewBox="0 0 15 15"><path d="M1.6 8.4 A5.6 5.6 0 0 1 11.4 3.4 M13.2 6.4 A5.6 5.6 0 0 1 3.4 11.4" stroke="#1487d0" stroke-width="1.7" fill="none"/><path d="M9.4 1 l4 .6 l-1.6 3.8 z M5.4 13.8 l-4 -.6 l1.6 -3.8 z" fill="#1487d0"/><path d="M4.6 7.2 A2.8 2.8 0 0 1 9.4 5.4 M10.2 7.6 A2.8 2.8 0 0 1 5.4 9.4" stroke="#1487d0" stroke-width="1.2" fill="none"/></svg>
<div class="arr" style="left:974.5px;top:380px;"></div>
<div class="hd" style="left:991px;top:376px;"></div>
<div class="a" style="left:996px;top:367px;width:1px;height:29px;background:#c8c4c0;"></div>
<svg style="left:1009.5px;top:377px" width="15" height="10" viewBox="0 0 15 10"><path d="M0 5 L5.4 0 V3.4 H14.4 V6.6 H5.4 V10 Z" fill="#b0aeab"/></svg>
<div class="arr" style="left:1033.5px;top:380px;border-top-color:#b0aeab;"></div>
<svg style="left:1054.5px;top:377px" width="15" height="10" viewBox="0 0 15 10"><path d="M14.4 5 L9 0 V3.4 H0 V6.6 H9 V10 Z" fill="#b0aeab"/></svg>
<div class="arr" style="left:1078.5px;top:380px;border-top-color:#b0aeab;"></div>

<!-- ===== GRID ===== -->
<div class="a" style="left:346px;top:403px;width:21px;height:66px;background:#d5d1cd;border:1px solid #bdb8b3;box-sizing:border-box;"></div>
<div class="a" style="left:369px;top:403px;width:715px;height:241px;background:#fff;"></div>
<div class="a" style="left:369px;top:403px;width:715px;height:28px;background:#f7f7f7;"></div>
<div class="a" style="left:399px;top:450px;width:685px;height:1px;background:#ebebeb;"></div>
<div class="a" style="left:399px;top:470px;width:685px;height:1px;background:#ebebeb;"></div>
<div class="a" style="left:399px;top:490px;width:685px;height:1px;background:#ebebeb;"></div>
<div class="a" style="left:399px;top:510px;width:685px;height:1px;background:#ebebeb;"></div>
<div class="a" style="left:399px;top:530px;width:685px;height:1px;background:#ebebeb;"></div>
<div class="a" style="left:399px;top:550px;width:685px;height:1px;background:#ebebeb;"></div>
<div class="a" style="left:399px;top:570px;width:685px;height:1px;background:#ebebeb;"></div>
<div class="a" style="left:399px;top:590px;width:685px;height:1px;background:#ebebeb;"></div>
<div class="a" style="left:399px;top:610px;width:685px;height:1px;background:#ebebeb;"></div>
<div class="a" style="left:399px;top:630px;width:685px;height:1px;background:#ebebeb;"></div>
<div class="a" style="left:503px;top:431px;width:1px;height:213px;background:#ebebeb;"></div>
<div class="a" style="left:620px;top:431px;width:1px;height:213px;background:#ebebeb;"></div>
<div class="a" style="left:369px;top:403px;width:29px;height:241px;background:#f6f5f4;"></div>
<div class="a" style="left:399px;top:403px;width:105px;height:27px;background:#f4a88c;"></div>
<div class="a" style="left:504px;top:403px;width:116px;height:27px;background:#f6f5f4;"></div>
<div class="a" style="left:369px;top:431px;width:29px;height:19px;background:#f4a88c;"></div>
<div class="a" style="left:399px;top:431px;width:104px;height:19px;background:#e2937b;border:1px solid #1a1a1a;box-sizing:border-box;"></div>
<div class="a" style="left:504px;top:431px;width:116px;height:19px;background:#dcd1d5;"></div>
<div class="a" style="left:399px;top:471px;width:221px;height:19px;background:#dce4f0;"></div>
<div class="a" style="left:399px;top:511px;width:221px;height:19px;background:#dce4f0;"></div>
<div class="a" style="left:399px;top:551px;width:221px;height:19px;background:#dce4f0;"></div>
<div class="a" style="left:398px;top:403px;width:1px;height:241px;background:#1a1a1a;"></div>
<div class="a" style="left:369px;top:430px;width:252px;height:1px;background:#1a1a1a;"></div>
<div class="a" style="left:620px;top:403px;width:1px;height:28px;background:#1a1a1a;"></div>
<div class="a" style="left:369px;top:450px;width:29px;height:1px;background:#1a1a1a;"></div>
<div class="a" style="left:369px;top:470px;width:29px;height:1px;background:#1a1a1a;"></div>
<div class="a" style="left:369px;top:490px;width:29px;height:1px;background:#1a1a1a;"></div>
<div class="a" style="left:369px;top:510px;width:29px;height:1px;background:#1a1a1a;"></div>
<div class="a" style="left:369px;top:530px;width:29px;height:1px;background:#1a1a1a;"></div>
<div class="a" style="left:369px;top:550px;width:29px;height:1px;background:#1a1a1a;"></div>
<div class="a" style="left:369px;top:570px;width:29px;height:1px;background:#1a1a1a;"></div>
<div class="a" style="left:369px;top:590px;width:29px;height:1px;background:#1a1a1a;"></div>
<div class="a" style="left:369px;top:610px;width:29px;height:1px;background:#1a1a1a;"></div>
<div class="a" style="left:369px;top:630px;width:29px;height:1px;background:#1a1a1a;"></div>
<svg style="left:404.8px;top:413px" width="17" height="12" viewBox="0 0 17 12"><path d="M.8 7 V2.4 Q.8 .8 2.4 .8 Q4 .8 4 2.4 V7 M.8 4.6 H4 M6.2 .8 V7 H8.2 Q9.6 7 9.6 5.4 Q9.6 3.9 8.2 3.9 H6.2 M8 3.9 Q9.2 3.9 9.2 2.3 Q9.2 .8 8 .8 H6.2 M15.2 1.6 Q14.6 .8 13.6 .8 Q11.8 .8 11.8 3.9 Q11.8 7 13.6 7 Q14.6 7 15.2 6.2" stroke="#1487d0" stroke-width="1.5" fill="none"/><rect x="8.4" y="4.6" width="7.8" height="7" fill="#1487d0" stroke="#f4a88c" stroke-width=".8"/><circle cx="12.4" cy="6.8" r="1.1" fill="none" stroke="#fff" stroke-width=".9"/><path d="M12.4 7.9 V10.6 M12.4 9.4 h1.2" stroke="#fff" stroke-width=".9"/></svg>
<div class="t dk" style="letter-spacing:-0.206px;left:424px;top:407px;">nom_c</div>
<svg style="left:483.5px;top:410.5px" width="8" height="12" viewBox="0 0 8 12"><path d="M.2 .3 H7.8 L5.4 4.4 V12 L2.6 10 V4.4 Z" fill="#1487d0"/><path d="M1.6 1.3 H6.2 L4.5 4.2 V10 L3.6 9.4 V4.2 Z" fill="#9ad8f7"/></svg>
<svg style="left:494px;top:410px" width="6" height="14" viewBox="0 0 6 14"><path d="M3 .2 L5.6 3.6 H.4 Z M3 13.8 L5.6 10.4 H.4 Z" fill="#1487d0"/><path d="M3 3 V11" stroke="#1487d0" stroke-width="1.5"/></svg>
<svg style="left:510px;top:413px" width="17" height="8" viewBox="0 0 17 8"><path d="M.8 7 V2.4 Q.8 .8 2.4 .8 Q4 .8 4 2.4 V7 M.8 4.6 H4 M6.2 .8 V7 H8.2 Q9.6 7 9.6 5.4 Q9.6 3.9 8.2 3.9 H6.2 M8 3.9 Q9.2 3.9 9.2 2.3 Q9.2 .8 8 .8 H6.2 M15.2 1.6 Q14.6 .8 13.6 .8 Q11.8 .8 11.8 3.9 Q11.8 7 13.6 7 Q14.6 7 15.2 6.2" stroke="#1487d0" stroke-width="1.5" fill="none"/></svg>
<div class="t dk" style="letter-spacing:0.308px;left:528.5px;top:407px;">provincia</div>
<svg style="left:601px;top:410.5px" width="8" height="12" viewBox="0 0 8 12"><path d="M.2 .3 H7.8 L5.4 4.4 V12 L2.6 10 V4.4 Z" fill="#1487d0"/><path d="M1.6 1.3 H6.2 L4.5 4.2 V10 L3.6 9.4 V4.2 Z" fill="#9ad8f7"/></svg>
<svg style="left:611.5px;top:410px" width="6" height="14" viewBox="0 0 6 14"><path d="M3 .2 L5.6 3.6 H.4 Z M3 13.8 L5.6 10.4 H.4 Z" fill="#1487d0"/><path d="M3 3 V11" stroke="#1487d0" stroke-width="1.5"/></svg>
<div class="t b dk" style="letter-spacing:0.722px;left:372.5px;top:430.5px;">1</div>
<div class="t dk" style="letter-spacing:-0.263px;left:403.5px;top:430.5px;color:#fbeee8;">Plana Baixa</div>
<div class="t dk" style="letter-spacing:0.139px;left:508.5px;top:430.5px;">Castelló</div>
<div class="t dk" style="letter-spacing:0.722px;left:372.5px;top:450.5px;">2</div>
<div class="t dk" style="letter-spacing:0.288px;left:403.5px;top:450.5px;">Baix Maestrat</div>
<div class="t dk" style="letter-spacing:0.139px;left:508.5px;top:450.5px;">Castelló</div>
<div class="t dk" style="letter-spacing:0.722px;left:372.5px;top:470.5px;">3</div>
<div class="t dk" style="letter-spacing:0.469px;left:403.5px;top:470.5px;">Alt Millars</div>
<div class="t dk" style="letter-spacing:0.139px;left:508.5px;top:470.5px;">Castelló</div>
<div class="t dk" style="letter-spacing:0.722px;left:372.5px;top:490.5px;">4</div>
<div class="t dk" style="letter-spacing:0.110px;left:403.5px;top:490.5px;">Alt Palància</div>
<div class="t dk" style="letter-spacing:0.139px;left:508.5px;top:490.5px;">Castelló</div>
<div class="t dk" style="letter-spacing:0.722px;left:372.5px;top:510.5px;">5</div>
<div class="t dk" style="letter-spacing:0.139px;left:403.5px;top:510.5px;">Plana Alta</div>
<div class="t dk" style="letter-spacing:0.139px;left:508.5px;top:510.5px;">Castelló</div>
<div class="t dk" style="letter-spacing:0.722px;left:372.5px;top:530.5px;">6</div>
<div class="t dk" style="letter-spacing:0.360px;left:403.5px;top:530.5px;">Alcalatén</div>
<div class="t dk" style="letter-spacing:0.139px;left:508.5px;top:530.5px;">Castelló</div>
<div class="t dk" style="letter-spacing:0.722px;left:372.5px;top:550.5px;">7</div>
<div class="t dk" style="letter-spacing:0.595px;left:403.5px;top:550.5px;">Alt Maestrat</div>
<div class="t dk" style="letter-spacing:0.139px;left:508.5px;top:550.5px;">Castelló</div>
<div class="t dk" style="letter-spacing:0.722px;left:372.5px;top:570.5px;">8</div>
<div class="t dk" style="letter-spacing:0.411px;left:403.5px;top:570.5px;">Ports</div>
<div class="t dk" style="letter-spacing:0.139px;left:508.5px;top:570.5px;">Castelló</div>
<div class="t dk" style="letter-spacing:0.098px;left:342.5px;top:419.5px;width:29px;text-align:center;transform:rotate(-90deg);">Grid</div>
<div class="t dk" style="letter-spacing:0.052px;left:343.0px;top:485px;width:28px;text-align:center;transform:rotate(-90deg);">Text</div>
<div class="t dk" style="letter-spacing:-0.158px;left:333.5px;top:614.5px;width:47px;text-align:center;transform:rotate(-90deg);">Record</div>
<svg style="left:349px;top:447px" width="14" height="14" viewBox="0 0 14 14"><rect x=".6" y=".6" width="12.8" height="12.8" fill="#eef4f8" stroke="#1487d0" stroke-width="1.2"/><path d="M.6 4.9 H13.4 M.6 9.1 H13.4 M4.9 .6 V13.4 M9.1 .6 V13.4" stroke="#1487d0" stroke-width=".9"/></svg>
<svg style="left:352px;top:513.5px" width="11" height="16" viewBox="0 0 11 16"><g transform="translate(0,16) rotate(-90)"><path d="M2.6 3.8 L.7 5.7 L2.6 7.6 M4.6 3.8 L6.5 5.7 L4.6 7.6" stroke="#1487d0" stroke-width="1" fill="none"/><path d="M8 2.4 V.9 H15 V2.4 M11.5 .9 V9.6 M10 9.7 H13" stroke="#1487d0" stroke-width="1.1" fill="none"/></g></svg>
<svg style="left:349px;top:651.5px" width="16" height="15" viewBox="0 0 16 15"><path d="M.8 14 V6.4 H4 L5.6 4.4 H9" stroke="#1487d0" stroke-width="1.4" fill="none"/><path d="M.8 14 H12.6 V9" stroke="#1487d0" stroke-width="1.4" fill="none"/><circle cx="12.2" cy="4" r="3.4" fill="#1487d0"/><path d="M10.2 4 h4" stroke="#fff" stroke-width="1.2" stroke-dasharray="1.2 .8"/></svg>
<svg style="left:1089.5px;top:412px" width="15" height="15" viewBox="0 0 15 15"><rect x="1.6" y=".6" width="12.8" height="11.8" fill="#7fd0f5" stroke="#1487d0" stroke-width="1.2"/><rect x="8.4" y=".6" width="6" height="11.8" fill="#1487d0"/><rect x="0" y="7" width="8" height="8" fill="#e1dedb"/><g transform="translate(0,7.4) scale(.5)"><use href="#gear"/></g></svg>
<div class="t dk" style="letter-spacing:-0.257px;left:1075px;top:441.5px;width:44px;text-align:center;transform:rotate(90deg);">Panels</div>
<svg style="left:1088px;top:490px" width="14" height="14" viewBox="0 0 14 14"><circle cx="3.4" cy="3.4" r="2.6" fill="none" stroke="#1487d0" stroke-width="1.1"/><circle cx="10.6" cy="3.4" r="2.6" fill="none" stroke="#1487d0" stroke-width="1.1"/><circle cx="3.4" cy="10.6" r="2.6" fill="none" stroke="#1487d0" stroke-width="1.1"/><circle cx="10.6" cy="10.6" r="2.6" fill="none" stroke="#ef8a17" stroke-width="1.1"/><path d="M2.2 3.4 h2.4 M9.4 3.4 h2.4 M10.6 2.2 v2.4 M2.4 9.6 l2 2 M4.4 9.6 l-2 2 M9.4 10 h2.4 M9.4 11.2 h2.4" stroke="#1487d0" stroke-width=".9"/></svg>
<svg style="left:1088px;top:512px" width="14" height="14" viewBox="0 0 14 14"><circle cx="7" cy="7" r="6.2" fill="none" stroke="#1487d0" stroke-width="1.3"/><circle cx="4.8" cy="4.8" r="1.1" fill="#1487d0"/><circle cx="9.2" cy="4.8" r="1.1" fill="#1487d0"/><circle cx="4.8" cy="9.2" r="1.1" fill="#1487d0"/><circle cx="9.2" cy="9.2" r="1.1" fill="#1487d0"/></svg>
<svg style="left:1088px;top:534px" width="14" height="14" viewBox="0 0 14 14"><rect x="0" y="0" width="14" height="14" fill="#1487d0"/><rect x="1.5" y="3.5" width="2" height="2" fill="#fff"/><rect x="1.5" y="7.5" width="2" height="2" fill="#fff"/><rect x="1.5" y="11.5" width="2" height="2" fill="#fff"/><rect x="3.5" y="5.5" width="2" height="2" fill="#fff"/><rect x="3.5" y="9.5" width="2" height="2" fill="#fff"/><rect x="5.5" y="3.5" width="2" height="2" fill="#fff"/><rect x="5.5" y="7.5" width="2" height="2" fill="#fff"/><rect x="5.5" y="11.5" width="2" height="2" fill="#fff"/><rect x="7.5" y="5.5" width="2" height="2" fill="#fff"/><rect x="7.5" y="9.5" width="2" height="2" fill="#fff"/><rect x="9.5" y="3.5" width="2" height="2" fill="#fff"/><rect x="9.5" y="7.5" width="2" height="2" fill="#fff"/><rect x="9.5" y="11.5" width="2" height="2" fill="#fff"/><rect x="11.5" y="5.5" width="2" height="2" fill="#fff"/><rect x="11.5" y="9.5" width="2" height="2" fill="#fff"/></svg>
<svg style="left:1088px;top:555.5px" width="14" height="16" viewBox="0 0 14 16"><path d="M6 0 v4 M4.4 1.6 h3.2" stroke="#ef8a17" stroke-width="1.1"/><rect x=".6" y="4.6" width="12.8" height="10.8" fill="#fff" stroke="#1487d0" stroke-width="1.2"/><path d="M.6 5.4 h12.8 v2 h-12.8 z" fill="#1487d0"/><path d="M.6 10 H13.4 M.6 12.8 H13.4 M9.8 4.6 V15.4" stroke="#1487d0" stroke-width="1"/><rect x="4.2" y="4" width="3.6" height="12" fill="#ef8a17"/><path d="M4.2 7.4 h3.6 M4.2 10 h3.6 M4.2 12.8 h3.6" stroke="#fff" stroke-width=".7"/></svg>
<svg style="left:1088px;top:578px" width="15" height="15" viewBox="0 0 15 15"><rect x=".7" y=".7" width="13" height="13" fill="#fff" stroke="#1487d0" stroke-width="1.4"/><rect x=".7" y=".7" width="13" height="3" fill="#1487d0"/><rect x=".7" y="3.6" width="7.8" height="5" fill="#1487d0"/><rect x="8" y="8" width="7" height="7" fill="#e1dedb"/><path d="M8.6 11.6 h5.6 M8.6 10 v3.2 M14.2 10 v3.2" stroke="#1487d0" stroke-width="1"/></svg>
<svg style="left:1087.5px;top:728px" width="15" height="15" viewBox="0 0 16 15"><rect x=".4" y=".6" width="4.4" height="14" rx="1.4" fill="#1487d0"/><rect x="6.6" y="10.4" width="9" height="4.2" rx="1" fill="#1487d0"/><path d="M8.4 3.4 C12 3.4 14.6 6 14.6 9.4" stroke="#1487d0" stroke-width="1.5" fill="none"/><path d="M7 3.4 L10.4 .6 V6.2 Z" fill="#1487d0"/></svg>

<div class="a" id="colsep" style="left:503px;top:451px;width:1px;height:150px;background:rgba(255,255,255,0.45);"></div>
<!-- ===== RESULT BOTTOM TOOLBARS ===== -->
<svg style="left:377.5px;top:652px" width="15" height="15" viewBox="0 0 15 15"><circle cx="7.5" cy="7.5" r="6.6" fill="#fff" stroke="#1da12a" stroke-width="1.4"/><path d="M4.2 7.6 L6.8 10.2 L11 5.4" stroke="#1da12a" stroke-width="1.4" fill="none"/></svg>
<div class="t dis" style="letter-spacing:-0.816px;left:404.5px;top:649px;">Save</div>
<svg style="left:448px;top:653px" width="13" height="12" viewBox="0 0 13 12"><rect x=".6" y=".6" width="11.8" height="10.8" fill="#f9b0a8" stroke="#e8281e" stroke-width="1.2"/><path d="M3 2.8 L10 9.2 M10 2.8 L3 9.2" stroke="#e8281e" stroke-width="1.2"/></svg>
<div class="t dis" style="letter-spacing:-0.057px;left:473.5px;top:649px;">Cancel</div>
<svg style="left:530px;top:652px" width="14" height="15" viewBox="0 0 14 15"><path d="M3.4 .6 H13.6 C12 .6 11.6 1.6 11.6 2.6 V12 C11.6 13.6 10.6 14.4 9 14.4 H.4 C2 14.4 2.4 13.4 2.4 12.4 V2 C2.4 1 2.8 .6 3.4 .6 Z" fill="#1487d0"/><circle cx="6.8" cy="9" r="2.2" fill="none" stroke="#fff" stroke-width="1.1"/><path d="M8.4 10.6 L10.2 12.6" stroke="#fff" stroke-width="1.2"/></svg>
<div class="t dis" style="letter-spacing:0.454px;left:556.5px;top:649px;">Script</div>
<div class="a" style="left:612.5px;top:646px;width:1px;height:26px;background:#c8c4c0;"></div>
<svg style="left:627px;top:653px" width="16" height="13" viewBox="0 0 16 13"><path d="M0 1 H14 M0 5.6 H10 M0 10.2 H6" stroke="#1487d0" stroke-width="1.6"/><path d="M8.6 12.6 L9.4 9.8 L13.8 5.4 L15.4 7 L11 11.4 Z" fill="#1487d0"/></svg>
<svg style="left:653.5px;top:653px" width="16" height="13" viewBox="0 0 16 13"><path d="M0 1 H14 M0 5.6 H7 M0 10.2 H7" stroke="#1487d0" stroke-width="1.6"/><path d="M8.4 8.6 H15.6 M12 5 V12.2" stroke="#12a012" stroke-width="1.8"/></svg>
<svg style="left:680.5px;top:653px" width="15" height="13" viewBox="0 0 15 13"><path d="M0 1 H14 M0 5.6 H3 M0 10.2 H3" stroke="#1487d0" stroke-width="1.6"/><path d="M6.4 4.6 A4.4 4.4 0 0 0 6.4 12.6 M12.2 4.6 A4.4 4.4 0 0 1 12.2 12.6" stroke="#1487d0" stroke-width="1.1" fill="none"/><path d="M7 8.6 H11.6 M9.3 6.2 V11" stroke="#12a012" stroke-width="1.4"/></svg>
<svg style="left:707.5px;top:653px" width="16" height="13" viewBox="0 0 16 13"><path d="M0 1 H14 M0 5.6 H7 M0 10.2 H7" stroke="#1487d0" stroke-width="1.6"/><path d="M8.2 8.8 H15.6" stroke="#e8281e" stroke-width="2"/></svg>
<svg style="left:765.5px;top:651.5px" width="15" height="16" viewBox="0 0 15 16"><rect x="5.2" y="4.4" width="8.8" height="7.2" fill="#5ec3f0" stroke="#1487d0" stroke-width="1.2"/><path d="M3.6 .6 H2 M6.4 .6 H5 M3.8 .6 V15 M3.6 15 H2 M6.4 15 H5 M.6 4 V11.6 H3" stroke="#1487d0" stroke-width="1.1" fill="none"/></svg>
<div class="t" style="letter-spacing:0.043px;left:793px;top:649.5px;">8 row(s) fetched - 30ms</div>

<!-- nav toolbar -->
<div class="hd" style="left:377px;top:688px;"></div>
<div class="a" style="left:382px;top:680px;width:1px;height:28px;background:#c8c4c0;"></div>
<svg style="left:397px;top:687px" width="12" height="14" viewBox="0 0 12 14"><path d="M1 0 V14 M10.6 .8 L4.4 7 L10.6 13.2" stroke="#1487d0" stroke-width="1.9" fill="none"/></svg>
<svg style="left:425.5px;top:687px" width="9" height="14" viewBox="0 0 9 14"><path d="M7.6 .8 L1.4 7 L7.6 13.2" stroke="#1487d0" stroke-width="1.9" fill="none"/></svg>
<svg style="left:453.5px;top:687px" width="9" height="14" viewBox="0 0 9 14"><path d="M1.4 .8 L7.6 7 L1.4 13.2" stroke="#1487d0" stroke-width="1.9" fill="none"/></svg>
<svg style="left:478.5px;top:687px" width="12" height="14" viewBox="0 0 12 14"><path d="M11 0 V14 M1.4 .8 L7.6 7 L1.4 13.2" stroke="#1487d0" stroke-width="1.9" fill="none"/></svg>
<div class="a" style="left:504px;top:680px;width:1px;height:28px;background:#c8c4c0;"></div>
<svg style="left:517.5px;top:686.5px" width="15" height="15" viewBox="0 0 15 15"><path d="M9 .4 H12.6 L14.4 2.2 V7.4 H9 Z" fill="#1487d0"/><path d="M.8 4.4 V10.6 H6.8 M4.6 8 L7.2 10.6 L4.6 13.2" stroke="#1487d0" stroke-width="1.2" fill="none"/></svg>
<svg style="left:545px;top:686.5px" width="15" height="15" viewBox="0 0 15 15"><path d="M.8 4.6 V.8 H4.6 M10.4 .8 H14.2 V4.6 M.8 10.4 V14.2 H4.6 M10.4 14.2 H14.2 V10.4" stroke="#1487d0" stroke-width="1.5" fill="none"/><path d="M4.2 3.4 H9 L10.8 5.2 V11.6 H4.2 Z" fill="#1487d0"/><path d="M5.8 6.8 H9.2 V10 H5.8 Z" fill="#8fd4f5"/></svg>
<div class="hd" style="left:577px;top:688px;"></div>
<div class="a" style="left:582px;top:680px;width:1px;height:28px;background:#c8c4c0;"></div>
<svg style="left:606.5px;top:686.5px" width="13" height="15" viewBox="0 0 13 15"><path d="M.8 9 V14 H12.2 V9" stroke="#1487d0" stroke-width="1.5" fill="none"/><path d="M6.5 10.6 V2" stroke="#1487d0" stroke-width="1.6"/><path d="M3 4.6 L6.5 1 L10 4.6" stroke="#1487d0" stroke-width="1.6" fill="none"/></svg>
<div class="hd" style="left:638.5px;top:688px;"></div>
<div class="a" style="left:643.5px;top:680px;width:1px;height:28px;background:#c8c4c0;"></div>
<svg style="left:656.5px;top:686.5px" width="15" height="15" viewBox="0 0 15 15"><use href="#gear"/></svg>

<!-- limit row -->
<div class="a" style="left:372.5px;top:715.5px;width:73px;height:29px;background:#fff;border:1px solid #cdc7c2;border-radius:5px;box-sizing:border-box;"></div>
<div class="t dk" style="letter-spacing:0.366px;left:380.5px;top:720px;">200</div>
<svg style="left:458px;top:723.5px" width="16" height="14" viewBox="0 0 16 14"><path d="M1.2 7.4 V5.6 A2.4 2.4 0 0 1 3.6 3.2 H12.6 M14.8 6.6 V8.4 A2.4 2.4 0 0 1 12.4 10.8 H3.4" stroke="#1da12a" stroke-width="1.8" fill="none"/><path d="M11 .4 L14.6 3.2 L11 6 M5 8 L1.4 10.8 L5 13.6" stroke="#1da12a" stroke-width="1.8" fill="none" stroke-linejoin="round"/></svg>
<div class="t" style="letter-spacing:-0.778px;left:486.5px;top:720.5px;">8</div>
<div class="hd" style="left:501.5px;top:724px;"></div>
<div class="t dk" style="letter-spacing:-0.513px;left:510.5px;top:720.5px;">Rows: 1</div>
<div class="a" style="left:560px;top:724px;width:1px;height:15px;background:#a5a5a5;"></div>

<!-- ===== STATUS BAR ===== -->
<div class="a" style="left:10px;top:747px;width:1099px;height:31px;background:#f6f5f4;"></div>
<div class="a" style="left:339px;top:746px;width:770px;height:1px;background:#cdc7c2;"></div>
<div class="a" style="left:10px;top:747px;width:329px;height:1px;background:#d4cfca;"></div>
<div class="sep" style="left:272px;top:748px;height:26px;"></div>
<div class="sep" style="left:310.5px;top:748px;height:26px;"></div>
<div class="sep" style="left:361px;top:748px;height:26px;"></div>
<div class="sep" style="left:514px;top:748px;height:26px;"></div>
<div class="sep" style="left:660px;top:748px;height:26px;"></div>
<div class="t" style="letter-spacing:-1.233px;left:278.5px;top:751px;">CET</div>
<div class="t" style="letter-spacing:-0.987px;left:316.5px;top:751px;">ca_ES</div>
<div class="t" style="letter-spacing:0.610px;left:367.5px;top:751px;">Writable</div>
<div class="t" style="letter-spacing:0.361px;left:520px;top:751px;">Smart Insert</div>
<div class="t" style="letter-spacing:-0.382px;left:666.5px;top:751px;">3 : 33 : 52</div>
<div class="hd" style="left:788px;top:756px;"></div>
</div>
</body>
</html>
